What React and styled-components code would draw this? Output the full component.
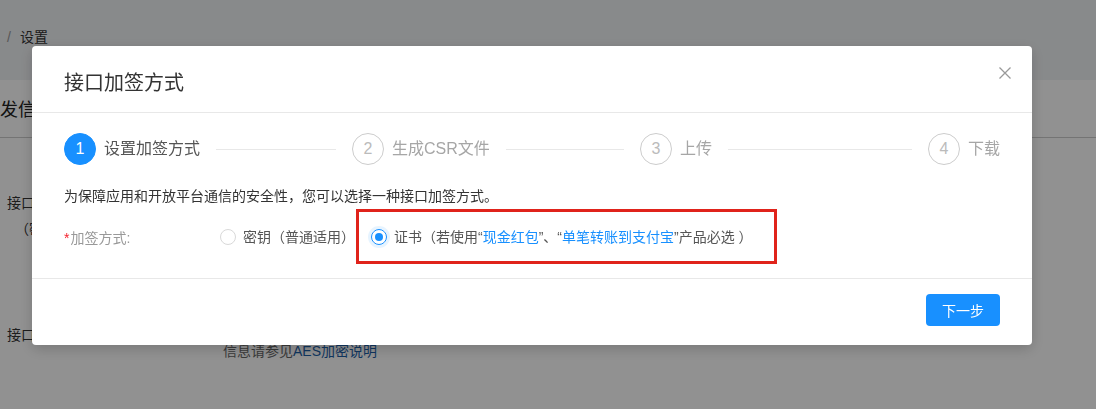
import styled, { createGlobalStyle } from 'styled-components';
import { useState } from 'react';

const GlobalStyle = createGlobalStyle`
  html, body {
    margin: 0;
    padding: 0;
    font-family: "Liberation Sans", "Noto Sans CJK SC", sans-serif;
    font-size: 14px;
    color: rgba(0, 0, 0, 0.65);
  }
  * { box-sizing: border-box; }
`;

const Page = styled.div`
  width: 1096px;
  min-height: 409px;
  background: #fff;
  overflow: hidden;
`;

const TopBar = styled.div`
  height: 80px;
  background: #f0f2f5;
  padding: 27px 0 0 7px;
  line-height: 20px;
  color: #333;
`;

const Slash = styled.span`
  margin-right: 9px;
  color: #999;
`;

const CardHeader = styled.div`
  height: 58px;
  border-bottom: 1px solid #ccc;
  display: flex;
  align-items: center;
  font-size: 18px;
  color: #222;
  padding-bottom: 2px;
`;

const CardBody = styled.div`
  padding: 52px 0 0 7px;
`;

const FieldRow = styled.div`
  display: flex;
  margin-bottom: ${(p) => p.$gap || 0}px;
`;

const FieldLabel = styled.div`
  width: 216px;
  line-height: 26px;
  color: #333;
`;

const SubLabel = styled.div`
  padding-left: 8px;
`;

const FieldValue = styled.div`
  padding-top: 19px;
  line-height: 20px;
  color: #666;
`;

const Link = styled.a`
  color: #1d5fa8;
  text-decoration: none;
`;

const Mask = styled.div`
  position: fixed;
  inset: 0;
  background: rgba(0, 0, 0, 0.43);
`;

const Modal = styled.div`
  position: fixed;
  left: 32px;
  top: 46px;
  width: 1000px;
  background: #fff;
  border-radius: 4px;
  box-shadow: 0 4px 14px rgba(0, 0, 0, 0.18);
`;

const ModalHeader = styled.div`
  padding: 23px 32px 15px;
  border-bottom: 1px solid #e8e8e8;
  font-size: 20px;
  line-height: 28px;
  color: #333;
`;

const Close = styled.button`
  position: absolute;
  top: 21px;
  right: 21px;
  width: 12px;
  height: 12px;
  padding: 0;
  border: none;
  background: none;
  cursor: pointer;
  display: flex;
`;

const ModalBody = styled.div`
  padding: 20px 32px 21px;
`;

const Steps = styled.div`
  display: flex;
  margin-bottom: 20px;
`;

const Step = styled.div`
  flex: ${(p) => (p.$last ? 'none' : 1)};
  margin-right: ${(p) => (p.$last ? 0 : 16)}px;
  display: flex;
  align-items: center;
  overflow: hidden;
  white-space: nowrap;
`;

const StepIcon = styled.div`
  width: 32px;
  height: 32px;
  flex: none;
  border-radius: 50%;
  display: flex;
  align-items: center;
  justify-content: center;
  font-size: 16px;
  margin-right: 8px;
  background: ${(p) => (p.$active ? '#1890ff' : '#fff')};
  border: 1px solid ${(p) => (p.$active ? '#1890ff' : '#ccc')};
  color: ${(p) => (p.$active ? '#fff' : '#bbb')};
`;

const StepTitle = styled.div`
  position: relative;
  font-size: 16px;
  line-height: 32px;
  padding-right: ${(p) => (p.$last ? 0 : 16)}px;
  color: ${(p) => (p.$active ? '#555' : '#a6a6a6')};

  &::after {
    content: '';
    display: ${(p) => (p.$last ? 'none' : 'block')};
    position: absolute;
    top: 16px;
    left: 100%;
    width: 9999px;
    height: 1px;
    background: #e8e8e8;
  }
`;

const Desc = styled.p`
  margin: 0 0 10px;
  line-height: 22px;
  color: #333;
`;

const FormRow = styled.div`
  display: flex;
  align-items: center;
  height: 40px;
`;

const Label = styled.div`
  width: 156px;
  color: #999;
`;

const Required = styled.span`
  color: #f5222d;
  margin-right: 1px;
`;

const RadioGroup = styled.div`
  display: flex;
  align-items: center;
`;

const RadioLabel = styled.label`
  position: relative;
  display: inline-flex;
  align-items: center;
  margin-right: 8px;
  line-height: 22px;
  color: #555;
  cursor: pointer;

  ${(p) =>
    p.$marked &&
    `&::after {
      content: '';
      position: absolute;
      left: -15px;
      right: -16px;
      top: -17px;
      bottom: -16px;
      border: 3px solid #e0231b;
      pointer-events: none;
    }`}
`;

const RadioDot = styled.span`
  width: 16px;
  height: 16px;
  border-radius: 50%;
  flex: none;
  border: 1px solid ${(p) => (p.$checked ? '#1890ff' : '#d9d9d9')};
  box-shadow: ${(p) => (p.$checked ? '0 0 0 3px rgba(24, 144, 255, 0.1)' : 'none')};
  display: flex;
  align-items: center;
  justify-content: center;

  &::after {
    content: '';
    width: 8px;
    height: 8px;
    border-radius: 50%;
    background: #1890ff;
    display: ${(p) => (p.$checked ? 'block' : 'none')};
  }
`;

const RadioText = styled.span`
  padding: 0 8px 0 7px;
`;

const Blue = styled.span`
  color: #1890ff;
`;

const ModalFooter = styled.div`
  border-top: 1px solid #e8e8e8;
  padding: 15px 32px 19px;
  display: flex;
  justify-content: flex-end;
`;

const PrimaryButton = styled.button`
  width: 74px;
  height: 32px;
  border: none;
  border-radius: 4px;
  background: #1890ff;
  color: #fff;
  font-family: inherit;
  font-size: 14px;
  cursor: pointer;
`;

const steps = ['设置加签方式', '生成CSR文件', '上传', '下载'];

export default function App() {
  const [mode, setMode] = useState('cert');

  return (
    <>
      <GlobalStyle />
      <Page>
        <TopBar>
          <Slash>/</Slash>设置
        </TopBar>
        <CardHeader>发信</CardHeader>
        <CardBody>
          <FieldRow $gap={80}>
            <FieldLabel>
              接口
              <SubLabel>（密</SubLabel>
            </FieldLabel>
          </FieldRow>
          <FieldRow>
            <FieldLabel>接口</FieldLabel>
            <FieldValue>
              信息请参见<Link>AES加密说明</Link>
            </FieldValue>
          </FieldRow>
        </CardBody>
      </Page>
      <Mask />
      <Modal>
        <ModalHeader>接口加签方式</ModalHeader>
        <Close aria-label="close">
          <svg width="12" height="12" viewBox="0 0 12 12">
            <path d="M0.5 0.5L11.5 11.5M11.5 0.5L0.5 11.5" stroke="#999" strokeWidth="1.3" />
          </svg>
        </Close>
        <ModalBody>
          <Steps>
            {steps.map((s, i) => {
              const last = i === steps.length - 1;
              return (
                <Step key={s} $last={last}>
                  <StepIcon $active={i === 0}>{i + 1}</StepIcon>
                  <StepTitle $active={i === 0} $last={last}>
                    {s}
                  </StepTitle>
                </Step>
              );
            })}
          </Steps>
          <Desc>为保障应用和开放平台通信的安全性，您可以选择一种接口加签方式。</Desc>
          <FormRow>
            <Label>
              <Required>*</Required>加签方式:
            </Label>
            <RadioGroup>
              <RadioLabel onClick={() => setMode('key')}>
                <RadioDot $checked={mode === 'key'} />
                <RadioText>密钥（普通适用）</RadioText>
              </RadioLabel>
              <RadioLabel $marked onClick={() => setMode('cert')}>
                <RadioDot $checked={mode === 'cert'} />
                <RadioText>
                  证书（若使用“<Blue>现金红包</Blue>”、“<Blue>单笔转账到支付宝</Blue>”产品必选 ）
                </RadioText>
              </RadioLabel>
            </RadioGroup>
          </FormRow>
        </ModalBody>
        <ModalFooter>
          <PrimaryButton>下一步</PrimaryButton>
        </ModalFooter>
      </Modal>
    </>
  );
}
